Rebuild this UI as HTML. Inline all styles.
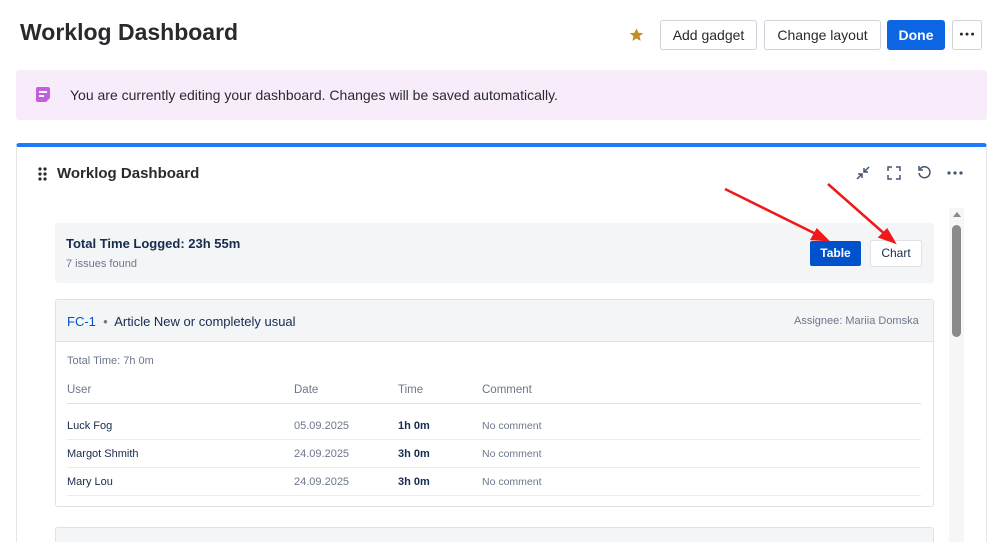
<!DOCTYPE html>
<html><head><style>
*{box-sizing:border-box;margin:0;padding:0}
html,body{width:999px;height:542px;overflow:hidden}
body{background:#fff;font-family:"Liberation Sans",sans-serif;color:#292a2e;position:relative}
.a{position:absolute}
.btn{position:absolute;top:20px;height:30px;border:1px solid #d0d4da;border-radius:3px;background:#fff;font-size:14px;line-height:28px;text-align:center;color:#292a2e}
.row{position:absolute;left:67px;width:854px;height:28px;border-bottom:1px solid #ebecf0;font-size:11px;line-height:28px;color:#172b4d}
.row span{position:absolute}
</style></head><body>
<div class="a" style="left:20px;top:19px;font-size:23px;font-weight:bold;color:#292a2e">Worklog Dashboard</div>
<svg class="a" style="left:628px;top:27px" width="17" height="16" viewBox="0 0 24 24"><path d="M12 2l2.9 6.6 7.1.6-5.4 4.7 1.6 7-6.2-3.7-6.2 3.7 1.6-7L2 9.2l7.1-.6z" fill="#c3901f"/></svg>
<div class="btn" style="left:660px;width:97px">Add gadget</div>
<div class="btn" style="left:764px;width:117px">Change layout</div>
<div class="btn" style="left:887px;width:58px;background:#0c66e4;border-color:#0c66e4;color:#fff;font-weight:bold">Done</div>
<svg class="btn" style="left:952px;width:30px" viewBox="0 0 30 30"><g fill="#292a2e"><circle cx="9" cy="14" r="1.6"/><circle cx="15" cy="14" r="1.6"/><circle cx="21" cy="14" r="1.6"/></g></svg>
<div class="a" style="left:16px;top:70px;width:971px;height:50px;background:#f8ebfa;border-radius:3px"></div>
<svg class="a" style="left:36px;top:87px" width="14" height="15" viewBox="0 0 14 15"><rect x="0" y="0" width="14" height="15" rx="2" fill="#c25fdc"/><rect x="3" y="4" width="8" height="2" fill="#fff"/><rect x="3" y="8" width="5" height="2" fill="#fff"/><path d="M10 15l4-4v4z" fill="#f8ebfa"/></svg>
<div class="a" style="left:70px;top:87px;font-size:14px;color:#292a2e">You are currently editing your dashboard. Changes will be saved automatically.</div>
<div class="a" style="left:16px;top:143px;width:971px;height:420px;border:1px solid #e4e6ea;border-top:4px solid #1d7afc;border-radius:3px"></div>
<svg class="a" style="left:38px;top:167px" width="9" height="14"><g fill="#292a2e"><circle cx="2" cy="2" r="1.6"/><circle cx="7" cy="2" r="1.6"/><circle cx="2" cy="7" r="1.6"/><circle cx="7" cy="7" r="1.6"/><circle cx="2" cy="12" r="1.6"/><circle cx="7" cy="12" r="1.6"/></g></svg>
<div class="a" style="left:57px;top:165px;font-size:15px;font-weight:bold">Worklog Dashboard</div>
<svg class="a" style="left:856px;top:166px" width="14" height="14" viewBox="0 0 14 14" fill="none" stroke="#44546f" stroke-width="1.5"><path d="M13 1L8 6M8 2v4h4M1 13l5-5M2 8h4v4"/></svg>
<svg class="a" style="left:887px;top:166px" width="14" height="14" viewBox="0 0 14 14" fill="none" stroke="#44546f" stroke-width="1.5"><path d="M1 5V1h4M9 1h4v4M13 9v4H9M5 13H1V9"/></svg>
<svg class="a" style="left:917px;top:165px" width="15" height="15" viewBox="0 0 15 15" fill="none" stroke="#44546f" stroke-width="1.5"><path d="M3 4A5.5 5.5 0 1 1 2 8"/><path d="M2 1v4h4"/></svg>
<svg class="a" style="left:945px;top:166px" width="20" height="14"><g fill="#44546f"><circle cx="4" cy="7" r="1.6"/><circle cx="10" cy="7" r="1.6"/><circle cx="16" cy="7" r="1.6"/></g></svg>
<div class="a" style="left:55px;top:223px;width:879px;height:60px;background:#f4f5f7;border-radius:3px"></div>
<div class="a" style="left:66px;top:236px;font-size:13px;font-weight:bold;color:#172b4d">Total Time Logged: 23h 55m</div>
<div class="a" style="left:66px;top:258px;font-size:11px;color:#6b778c">7 issues found</div>
<div class="a" style="left:810px;top:241px;width:51px;height:25px;background:#0052cc;border-radius:2px;color:#fff;font-size:12px;font-weight:bold;text-align:center;line-height:25px">Table</div>
<div class="a" style="left:870px;top:240px;width:52px;height:27px;background:#fff;border:1px solid #dfe1e6;border-radius:2px;font-size:12px;text-align:center;line-height:25px;color:#172b4d">Chart</div>
<svg class="a" style="left:700px;top:180px;z-index:5" width="230" height="90"><g stroke="#f01919" stroke-width="2.5" fill="#f01919"><line x1="25" y1="9" x2="118" y2="55"/><path d="M127 60l-15-1 5-9z"/><line x1="128" y1="4" x2="187" y2="56"/><path d="M194 62l-14-5 7-7z"/></g></svg>
<div class="a" style="left:55px;top:299px;width:879px;height:208px;border:1px solid #dfe1e6;border-radius:3px"></div>
<div class="a" style="left:56px;top:300px;width:877px;height:42px;background:#f4f5f7;border-bottom:1px solid #dfe1e6"></div>
<div class="a" style="left:67px;top:314px;font-size:13px;color:#172b4d"><span style="color:#0052cc">FC-1</span> <span style="color:#6b778c">&nbsp;•&nbsp;</span> Article New or completely usual</div>
<div class="a" style="left:794px;top:315px;font-size:11px;color:#6b778c">Assignee: Mariia Domska</div>
<div class="a" style="left:67px;top:355px;font-size:11px;color:#6b778c">Total Time: 7h 0m</div>
<div class="row" style="top:376px;border-bottom:1px solid #dfe1e6;color:#6b778c;font-size:11.5px"><span style="left:0">User</span><span style="left:227px">Date</span><span style="left:331px">Time</span><span style="left:415px">Comment</span></div>
<div class="row" style="top:412px"><span style="left:0">Luck Fog</span><span style="left:227px;color:#6b778c">05.09.2025</span><span style="left:331px;font-weight:bold">1h 0m</span><span style="left:415px;color:#6b778c;font-size:10.5px">No comment</span></div>
<div class="row" style="top:440px"><span style="left:0">Margot Shmith</span><span style="left:227px;color:#6b778c">24.09.2025</span><span style="left:331px;font-weight:bold">3h 0m</span><span style="left:415px;color:#6b778c;font-size:10.5px">No comment</span></div>
<div class="row" style="top:468px"><span style="left:0">Mary Lou</span><span style="left:227px;color:#6b778c">24.09.2025</span><span style="left:331px;font-weight:bold">3h 0m</span><span style="left:415px;color:#6b778c;font-size:10.5px">No comment</span></div>
<div class="a" style="left:55px;top:527px;width:879px;height:30px;border:1px solid #dfe1e6;background:#f4f5f7;border-radius:3px"></div>
<div class="a" style="left:949px;top:208px;width:15px;height:340px;background:#f6f6f6"></div>
<div class="a" style="left:953px;top:212px;width:0;height:0;border-left:4px solid transparent;border-right:4px solid transparent;border-bottom:5px solid #8a8a8a"></div>
<div class="a" style="left:952px;top:225px;width:9px;height:112px;background:#8a8a8a;border-radius:5px"></div>
</body></html>
